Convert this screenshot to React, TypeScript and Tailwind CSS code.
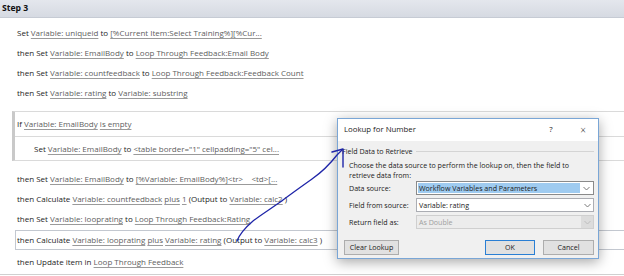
import React from 'react'

const K: React.FC<{ children: React.ReactNode }> = ({ children }) => (
    <span className="text-[#1e1e1e]">{children}</span>
)

const L: React.FC<{ children: React.ReactNode }> = ({ children }) => (
    <span className="text-[#606060] underline decoration-[#9a9a9a] underline-offset-[2px]">{children}</span>
)

const Row: React.FC<{ children: React.ReactNode; className?: string }> = ({ children, className }) => (
    <div className={'h-[20px] flex items-center ' + (className ?? 'pl-[17px]')}>
        <span className="whitespace-pre">{children}</span>
    </div>
)

const Chevron: React.FC<{ color?: string }> = ({ color = '#7a7a7a' }) => (
    <svg width="7" height="5" viewBox="0 0 7 5">
        <polyline points="0.5,1 3.5,4 6.5,1" fill="none" stroke={color} strokeWidth="1" />
    </svg>
)

const Combo: React.FC<{ text: string; variant: 'focus' | 'normal' | 'disabled' }> = ({ text, variant }) => {
    if (variant === 'focus') {
        return (
            <div className="h-[14px] w-[178px] border border-[#8a8a8a] bg-white flex items-stretch p-[1px]">
                <div className="flex-1 bg-[#9fcbf0] flex items-center pl-[1px] text-[#1a1a1a]">{text}</div>
                <div className="w-[12px] flex items-center justify-center"><Chevron /></div>
            </div>
        )
    }
    if (variant === 'disabled') {
        return (
            <div className="h-[14px] w-[178px] border border-[#cfcfcf] bg-[#ececec] flex items-stretch">
                <div className="flex-1 flex items-center pl-[2px] text-[#a0a0a0]">{text}</div>
                <div className="w-[12px] flex items-center justify-center bg-[#dcdcdc]"><Chevron color="#bdbdbd" /></div>
            </div>
        )
    }
    return (
        <div className="h-[14px] w-[178px] border border-[#abadb3] bg-white flex items-stretch">
            <div className="flex-1 flex items-center pl-[2px] text-[#1a1a1a]">{text}</div>
            <div className="w-[12px] flex items-center justify-center"><Chevron /></div>
        </div>
    )
}

const Button: React.FC<{ label: string; w: string; primary?: boolean }> = ({ label, w, primary }) => (
    <div className={'h-[15px] flex items-center justify-center bg-[#e1e1e1] text-[#1a1a1a] ' + w + ' ' + (primary ? 'border border-[#2a7fd4]' : 'border border-[#adadad]')}>
        {label}
    </div>
)

const Dialog: React.FC = () => (
    <div className="absolute left-[337px] top-[118px] w-[262px] h-[141px] border border-[#7aa6d6] bg-[#f0f0f0] shadow-[0_3px_12px_rgba(0,0,0,0.35)] flex flex-col text-[7.1px] font-['Open_Sans',sans-serif]">
        <div className="h-[22px] bg-white flex items-center pl-[6px] text-[7.8px] text-[#1a1a1a]">
            <span>Lookup for Number</span>
            <span className="ml-auto w-[10px] text-center">?</span>
            <span className="ml-[22px] mr-[10px] w-[10px] text-center text-[10px] font-light">×</span>
        </div>
        <div className="flex-1 flex flex-col pt-[5px] pl-[4px] pr-[4px] text-[#1a1a1a]">
            <div className="h-[10px] flex items-center gap-[3px]">
                <span>Field Data to Retrieve</span>
                <div className="flex-1 h-px bg-[#d4d4d4]" />
            </div>
            <div className="mt-[4px] pl-[7px] leading-[10px]">
                Choose the data source to perform the lookup on, then the field to<br />retrieve data from:
            </div>
            <div className="mt-[1px] pl-[7px] flex flex-col gap-[3px]">
                <div className="flex items-center">
                    <span className="w-[67px]">Data source:</span>
                    <Combo text="Workflow Variables and Parameters" variant="focus" />
                </div>
                <div className="flex items-center">
                    <span className="w-[67px]">Field from source:</span>
                    <Combo text="Variable: rating" variant="normal" />
                </div>
                <div className="flex items-center">
                    <span className="w-[67px]">Return field as:</span>
                    <Combo text="As Double" variant="disabled" />
                </div>
            </div>
            <div className="mt-[11px] pl-[2px] flex items-center">
                <Button label="Clear Lookup" w="w-[55px]" />
                <div className="ml-auto flex gap-[8px]">
                    <Button label="OK" w="w-[50px]" primary />
                    <Button label="Cancel" w="w-[51px]" />
                </div>
            </div>
        </div>
    </div>
)

const Arrow: React.FC = () => (
    <svg className="absolute left-0 top-0 pointer-events-none" width="624" height="276" viewBox="0 0 624 276">
        <path
            d="M237,241 C240,233 246,227 253,221 C262,214 272,208 283,200 C295,191 305,184 312,179 C322,172 330,164 337,155 L342,150"
            fill="none" stroke="#1f25a8" strokeWidth="1.3" strokeLinecap="round" />
        <path d="M332,152 L343,149 L343,167" fill="none" stroke="#1f25a8" strokeWidth="1.4" strokeLinecap="round" strokeLinejoin="round" />
    </svg>
)

export default function App() {
    return (
        <div className="relative w-[624px] h-[276px] overflow-hidden bg-white font-['Open_Sans',sans-serif] text-[8px]">
            <div className="h-[18px] bg-gradient-to-b from-[#e4e7ed] to-[#d6dae2] border-b border-[#c6cbd4] flex items-center pl-[2px]">
                <span className="text-[8.6px] font-bold text-[#111]">Step 3</span>
            </div>
            <div className="pt-[5px] flex flex-col">
                <Row><K>Set </K><L>Variable: uniqueid</L><K> to </K><L>[%Current Item:Select Training%][%Cur...</L></Row>
                <Row><K>then Set </K><L>Variable: EmailBody</L><K> to </K><L>Loop Through Feedback:Email Body</L></Row>
                <Row><K>then Set </K><L>Variable: countfeedback</L><K> to </K><L>Loop Through Feedback:Feedback Count</L></Row>
                <Row><K>then Set </K><L>Variable: rating</L><K> to </K><L>Variable: substring</L></Row>
            </div>
            <div className="mt-[8px] ml-[12px] border-l-[3px] border-l-[#c9c9c9] border-t border-b border-[#dadada] flex flex-col">
                <div className="h-[25px] flex items-center pl-[2px] border-b border-[#dadada]">
                    <span className="whitespace-pre"><K>If </K><L>Variable: EmailBody</L> <L>is empty</L></span>
                </div>
                <div className="h-[23px] flex items-center pl-[19px]">
                    <span className="whitespace-pre"><K>Set </K><L>Variable: EmailBody</L><K> to </K><L>{'<table border="1" cellpadding="5" cel...'}</L></span>
                </div>
            </div>
            <div className="mt-[8px] flex flex-col">
                <Row><K>then Set </K><L>Variable: EmailBody</L><K> to </K><L>{'[%Variable: EmailBody%]<tr>    <td>[...'}</L></Row>
                <Row><K>then Calculate </K><L>Variable: countfeedback</L> <L>plus</L> <L>1</L><K> (Output to </K><L>Variable: calc2</L><K> )</K></Row>
                <Row><K>then Set </K><L>Variable: looprating</L><K> to </K><L>Loop Through Feedback:Rating</L></Row>
                <div className="mt-[1px] ml-[15px] h-[20px] border border-r-0 border-[#c3c8d0] flex items-center pl-[1px]">
                    <span className="whitespace-pre"><K>then Calculate </K><L>Variable: looprating</L> <L>plus</L> <L>Variable: rating</L><K> (Output to </K><L>Variable: calc3</L><K> )</K></span>
                </div>
                <Row className="pl-[17px] mt-[2px]"><K>then Update item in </K><L>Loop Through Feedback</L></Row>
            </div>
            <div className="mt-[2px] h-px bg-[#d0d0d0]" />
            <Dialog />
            <Arrow />
        </div>
    )
}
